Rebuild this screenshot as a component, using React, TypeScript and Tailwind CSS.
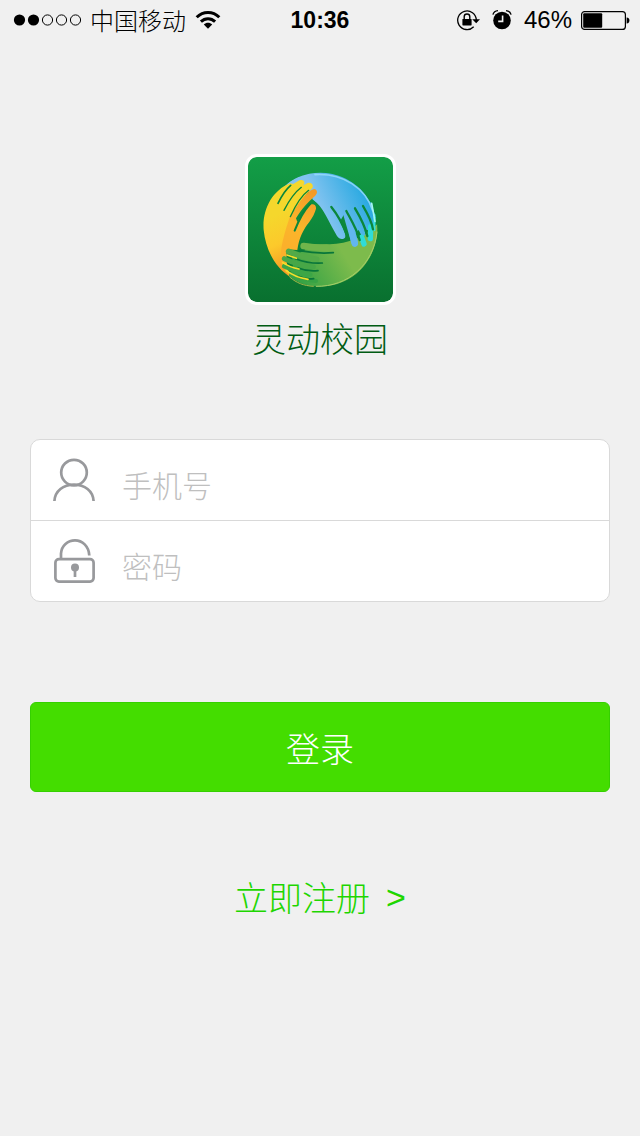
import React, { useState } from 'react';

const StatusBar: React.FC = () => (
  <header className="grid h-10 grid-cols-[1fr_auto_1fr] items-center px-3 text-2xl leading-10 text-black">
    <div className="flex items-center">
      <svg className="h-3 w-[70px]" viewBox="0 0 70 12" aria-hidden="true">
        <circle cx="7.5" cy="6" r="5.6" />
        <circle cx="21.5" cy="6" r="5.6" />
        <circle cx="35.5" cy="6" r="5.1" fill="none" stroke="#000" />
        <circle cx="49.5" cy="6" r="5.1" fill="none" stroke="#000" />
        <circle cx="63.5" cy="6" r="5.1" fill="none" stroke="#000" />
      </svg>
      <span className="ml-2 font-light">中国移动</span>
      <svg className="ml-2 h-5 w-7" viewBox="0 0 28 20" aria-hidden="true">
        <g fill="none" stroke="#000" strokeWidth="3">
          <path d="M2.7 7.2C9.2 .8 18.8 .8 25.3 7.2" />
          <path d="M6.9 11.6C11 7.7 17 7.7 21.1 11.6" />
        </g>
        <path d="M9.8 14.4C12.2 12.2 15.8 12.2 18.2 14.4L14 18.8Z" />
      </svg>
    </div>

    <span className="font-['Liberation_Sans'] text-[23px] font-bold">10:36</span>

    <div className="flex items-center justify-end">
      {/* rotation lock */}
      <svg className="h-6 w-6" viewBox="0 0 24 24" aria-hidden="true">
        <path d="M17.7 18.7A9.3 9.3 0 1 1 20.3 12" fill="none" stroke="#000" strokeWidth="1.3" />
        <path d="M16.2 11.2H24L20.2 15.2Z" />
        <rect x="6.4" y="11" width="9.2" height="6.4" rx=".6" />
        <path d="M8.2 11V8.8a2.8 2.8 0 0 1 5.6 0V11" fill="none" stroke="#000" strokeWidth="1.4" />
      </svg>
      <svg className="ml-3 h-6 w-5" viewBox="0 0 20 24" aria-hidden="true">
        <circle cx="10" cy="12.5" r="8.8" />
        <path d="M.9 6.6C1.6 4.2 3.5 2.8 6 2.6M19.1 6.6C18.4 4.2 16.5 2.8 14 2.6" fill="none" stroke="#000" strokeWidth="1.4" />
        <path d="M10.6 7.4V13.4H6.2" fill="none" stroke="#f0f0f0" strokeWidth="1.6" />
      </svg>
      <span className="ml-3 font-['Liberation_Sans']">46%</span>
      <svg className="ml-2 -mr-0.5 h-5 w-[50px]" viewBox="0 0 50 20" aria-hidden="true">
        <rect x="1.6" y="1.6" width="43.8" height="17.8" rx="3" fill="none" stroke="#000" strokeWidth="1.2" />
        <rect x="3.2" y="3.2" width="19" height="14.6" rx="1" />
        <path d="M46.6 7.6C48.8 7.6 49.4 9 49.4 10.5S48.8 13.4 46.6 13.4Z" />
      </svg>
    </div>
  </header>
);

const Logo: React.FC = () => (
  <svg
    className="box-content size-[145px] rounded-xl border-[3px] border-white"
    viewBox="24 21 435 435"
    role="img"
    aria-label="灵动校园"
  >
    <defs>
      <linearGradient id="tile" x1="0" y1="0" x2="0" y2="1">
        <stop offset="0" stopColor="#139e47" />
        <stop offset="1" stopColor="#09702f" />
      </linearGradient>
      <linearGradient id="blue" gradientUnits="userSpaceOnUse" x1="260" y1="210" x2="385" y2="150">
        <stop offset="0" stopColor="#82c3f0" />
        <stop offset="1" stopColor="#28a9e1" />
      </linearGradient>
      <linearGradient id="yellow" gradientUnits="userSpaceOnUse" x1="95" y1="200" x2="165" y2="350">
        <stop offset="0" stopColor="#f5d72c" />
        <stop offset=".5" stopColor="#fcc92b" />
        <stop offset="1" stopColor="#f39a25" />
      </linearGradient>
      <linearGradient id="orange" gradientUnits="userSpaceOnUse" x1="225" y1="130" x2="135" y2="290">
        <stop offset="0" stopColor="#f49a27" />
        <stop offset=".6" stopColor="#fbb52b" />
        <stop offset="1" stopColor="#fbb02b" />
      </linearGradient>
      <linearGradient id="green" gradientUnits="userSpaceOnUse" x1="180" y1="390" x2="310" y2="310">
        <stop offset="0" stopColor="#36a345" />
        <stop offset="1" stopColor="#7dbb4c" />
      </linearGradient>
      <clipPath id="disc">
        <circle cx="241" cy="239" r="171" />
      </clipPath>
    </defs>
    <rect x="24" y="21" width="435" height="435" rx="25" fill="url(#tile)" />

    {/* blue palm */}
    <g clipPath="url(#disc)">
      <path d="M112 140C140 88 190 66 241 66C330 68 392 128 408 205L385 205L340 200L262 185L218 148L200 110L150 110Z" fill="url(#blue)" />
    </g>

    {/* yellow hand */}
    <path
      d="M150 100C96 122 66 180 71 240C77 300 105 352 153 383L128 350L125 321L142 297L150 205L160 185C180 160 195 135 217 114C222 104 213 96 203 99L190 106C198 94 190 87 178 91L160 102Z"
      fill="url(#yellow)"
    />
    <path
      d="M149 202C137 240 121 285 122 328C125 350 138 371 154 383C145 366 137 342 140 298L172 300C177 264 190 238 208 216C218 202 225 188 228 176C229 165 221 160 212 164C198 174 185 195 172 216L168 205C188 172 205 155 226 137C234 129 232 118 222 117C206 121 193 140 181 154Z"
      fill="url(#orange)"
    />
    <g fill="none" stroke="#0b863b" strokeLinecap="round">
      <path d="M114 160C126 135 138 118 152 106" strokeWidth="5" />
      <path d="M132 181C148 150 163 128 184 112" strokeWidth="4" />
      <path d="M151 200C167 165 184 137 206 121" strokeWidth="4" />
      <path d="M164 242C176 211 190 184 210 162" strokeWidth="6" />
    </g>

    {/* green hand */}
    <g clipPath="url(#disc)">
      <path d="M184 279C260 289 345 285 395 237L415 220C415 320 350 412 235 411C200 410 170 397 146 377L159 350L156 318L196 301Z" fill="url(#green)" />
    </g>
    <g fill="none" strokeLinecap="round">
      <path d="M191 288C208 291 237 293 260 293" stroke="#72b54b" strokeWidth="20" />
      <path d="M146 304C172 315 202 325 230 328" stroke="#53aa48" strokeWidth="17" />
      <path d="M133 326C159 338 193 349 220 351" stroke="#47a747" strokeWidth="15" />
      <path d="M132 349C158 361 180 369 211 374" stroke="#3ca646" strokeWidth="13" />
      <path d="M155 375C181 386 200 392 228 393" stroke="#37a345" strokeWidth="12" />
      <g stroke="#08763a" strokeWidth="5">
        <path d="M178 302C205 307 247 311 280 308" />
        <path d="M166 326C190 335 218 341 247 339" />
        <path d="M174 354C191 361 211 364 234 362" />
        <path d="M176 379C193 387 208 388 221 386" />
      </g>
      <g stroke="#f5df2b" strokeWidth="5">
        <path d="M141 315L169 325" />
        <path d="M128 338C145 349 160 354 177 357" />
        <path d="M139 362C160 378 182 385 204 388" />
      </g>
      <path d="M150 382C170 399 190 407 220 409" stroke="#a7b947" strokeWidth="3" />
      <path d="M229 409C323 411 401 344 411 246" stroke="#a9ce69" strokeWidth="3" />
    </g>

    {/* blue fingers, over the green palm */}
    <path
      d="M218 148C250 170 265 215 291 258C297 268 309 270 315 263C319 257 311 238 300 214L318 183C322 220 327 255 335 282C340 294 352 292 354 282C355 275 351 262 347 248L356 240L367 262L376 255L374 240L390 240L404 216L396 160L330 120L250 110Z"
      fill="url(#blue)"
    />
    <g fill="none" strokeLinecap="round">
      <path d="M318 190L344 281" stroke="#62b6ee" strokeWidth="18" />
      <path d="M365 262L372 282" stroke="#2fdcd8" strokeWidth="16" />
      <path d="M392 230L391 266" stroke="#2fdcd8" strokeWidth="16" />
      <path d="M403 195L403 240" stroke="#38dedb" strokeWidth="7" />
      <g stroke="#0b873b" strokeWidth="7">
        <path d="M274 171C291 192 307 220 321 255" />
        <path d="M319 183C330 204 350 235 359 270" />
        <path d="M345 175C360 200 374 224 382 258" />
        <path d="M369 168C382 190 395 212 399 238" />
      </g>
      <path d="M225 74C310 69 377 115 398 182" stroke="#9bdcfa" strokeWidth="5" opacity=".8" />
      <path d="M395 160L405 214" stroke="#a5f5f2" strokeWidth="5" />
    </g>
  </svg>
);

const UserIcon: React.FC = () => (
  <svg className="size-11 shrink-0" viewBox="0 0 44 44" fill="none" stroke="#98999c" strokeWidth="2.7" aria-hidden="true">
    <circle cx="22" cy="14.6" r="12.8" />
    <path d="M2.4 43C3 33 11.3 26.6 22 26.6S41 33 41.6 43" />
  </svg>
);

const LockIcon: React.FC = () => (
  <svg className="size-11 shrink-0" viewBox="0 0 44 44" fill="none" stroke="#98999c" strokeWidth="2.7" aria-hidden="true">
    <rect x="3.4" y="20.2" width="38.2" height="22.4" rx="3.5" />
    <path d="M9 19.5V14.5C9.5 6.5 15.8 1.4 23 1.4S36.8 7 37.3 16.5" />
    <circle cx="23" cy="28.5" r="4" fill="#98999c" stroke="none" />
    <path d="M23 30V38" />
  </svg>
);

interface FieldProps {
  id: string;
  label: string;
  type: string;
  icon: React.ReactNode;
  value: string;
  onChange: (value: string) => void;
}

const Field: React.FC<FieldProps> = ({ id, label, type, icon, value, onChange }) => (
  <div className="box-content h-20">
    <div className="flex h-20 items-center gap-[26px] px-[21px]">
      <label htmlFor={id} aria-label={label}>
        {icon}
      </label>
      <input
        id={id}
        type={type}
        value={value}
        placeholder={label}
        onChange={(e) => onChange(e.target.value)}
        className="mt-2 h-12 min-w-0 flex-1 bg-transparent text-[30px] font-light text-[#333333] outline-none placeholder:text-[#bfbfbf]"
      />
    </div>
  </div>
);

export default function App() {
  const [phone, setPhone] = useState('');
  const [password, setPassword] = useState('');

  return (
    <div className="min-h-screen bg-[#f0f0f0] font-['Noto_Sans_CJK_SC',sans-serif]">
      <StatusBar />

      <main className="flex flex-col items-center px-[30px] pt-[114px]">
        <Logo />
        <h1 className="mt-2 text-[34px] leading-[50px] font-light text-[#005c13]">灵动校园</h1>

        <form className="mt-[76px] w-full" onSubmit={(e) => e.preventDefault()}>
          <div className="divide-y divide-[#d9d9d9] rounded-[10px] border border-[#d9d9d9] bg-white">
            <Field id="phone" label="手机号" type="tel" icon={<UserIcon />} value={phone} onChange={setPhone} />
            <Field id="password" label="密码" type="password" icon={<LockIcon />} value={password} onChange={setPassword} />
          </div>
          <button
            type="submit"
            className="mt-[100px] h-[90px] w-full rounded-md border border-[#35d000] bg-[#44dd00] text-[34px] font-light text-white"
          >
            登录
          </button>
        </form>

        <a href="#register" className="mt-20 flex items-center gap-4 text-[34px] leading-[50px] font-light text-[#1ed600]">
          立即注册
          <span className="font-['Liberation_Sans']">&gt;</span>
        </a>
      </main>
    </div>
  );
}
